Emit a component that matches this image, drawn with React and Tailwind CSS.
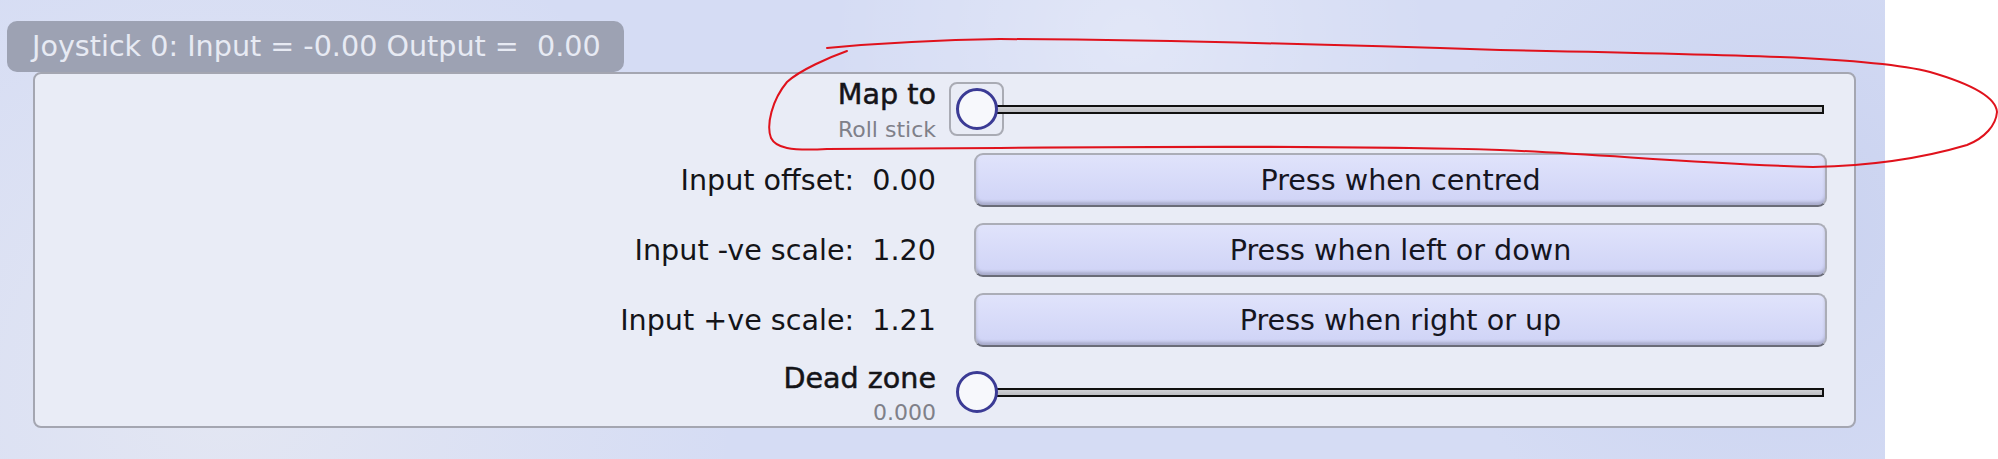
import React from "react";

const font = "font-['DejaVu_Sans','Verdana',sans-serif]";

const Knob = ({ focused }) => (
  <div className={`flex items-center justify-center w-[55px] h-[54px] rounded-[8px] border-2 ${focused ? "border-[#a9abb4]" : "border-transparent"}`}>
    <div className="relative z-10 w-[42px] h-[42px] rounded-full border-[3px] border-[#3b3b95] bg-[#f7f8fc]" />
  </div>
);

const Slider = ({ focused }) => (
  <div className="flex items-center w-[878px] h-[54px]">
    <Knob focused={focused} />
    <div className="flex-1 h-[9px] -ml-[28px] mr-[3px] border-2 border-[#101010] bg-linear-to-b from-[#cfd0d4] to-[#bdbec3]" />
  </div>
);

const StackLabel = ({ title, sub, gap }) => (
  <div className={`w-[901px] flex flex-col items-end ${gap}`}>
    <span className="text-[28.6px] leading-[32px] text-[#141418] [-webkit-text-stroke:0.5px_#141418]">{title}</span>
    <span className="text-[22px] leading-[26px] text-[#7f8089]">{sub}</span>
  </div>
);

const ButtonRow = ({ label, action, first }) => (
  <div className={`flex items-center h-[54px] ${first ? "mt-[10px]" : "mt-[16px]"}`}>
    <div className="w-[901px] text-right text-[28.6px] leading-[32px] text-[#141418] whitespace-pre">{label}</div>
    <div className="ml-[13px] w-[878px] flex h-full">
      <button className="ml-[25px] flex-1 h-full rounded-[9px] border-2 border-[#abadb7] border-b-[#6a6c78] bg-linear-to-b from-[#e0e3fb] to-[#cfd3f6] shadow-[inset_0_-3px_3px_rgba(60,60,80,0.25)] text-[28.6px] text-[#15151f]">
        {action}
      </button>
    </div>
  </div>
);

export default function App() {
  return (
    <div className={`relative w-[1998px] h-[459px] bg-white overflow-hidden ${font}`}>
      <div className="w-[1885px] h-full pl-[7px] pt-[21px] bg-[#d5dcf4] bg-[radial-gradient(circle_at_12%_85%,rgba(232,234,242,0.75),transparent_30%),radial-gradient(circle_at_60%_8%,rgba(255,255,255,0.3),transparent_25%),radial-gradient(circle_at_95%_50%,rgba(190,200,235,0.5),transparent_20%)]">
        <div className="w-[617px] h-[51px] rounded-[10px] bg-[#9da2b3] pl-[25px] flex items-center text-[28.6px] text-[#e7eaf3] whitespace-pre">
          Joystick 0: Input = -0.00 Output =  0.00
        </div>
        <div className="ml-[26px] w-[1823px] h-[356px] border-2 border-[#a4a6b1] rounded-[8px] bg-[#e9ecf6] pt-[4px]">
          {/* Map to */}
          <div className="flex items-start">
            <StackLabel title="Map to" sub="Roll stick" gap="gap-[7px]" />
            <div className="ml-[13px] mt-[4px]">
              <Slider focused />
            </div>
          </div>

          <ButtonRow first label="Input offset:  0.00" action="Press when centred" />
          <ButtonRow label="Input -ve scale:  1.20" action="Press when left or down" />
          <ButtonRow label="Input +ve scale:  1.21" action="Press when right or up" />

          {/* Dead zone */}
          <div className="flex items-start mt-[15px]">
            <StackLabel title="Dead zone" sub="0.000" gap="gap-[6px]" />
            <div className="ml-[13px] mt-[3px]">
              <Slider />
            </div>
          </div>
        </div>
      </div>

      {/* red hand-drawn annotation */}
      <svg className="absolute top-0 left-0 pointer-events-none" width="1998" height="459" viewBox="0 0 1998 459">
        <path
          d="M847 51 C830 57 800 70 787 82 C772 100 766 125 771 138 C776 148 790 151 827 149 L1000 148 C1200 146 1400 147 1500 150 C1600 154 1700 164 1813 167 C1863 166 1920 159 1967 145 C1985 138 1996 125 1997 112 C1996 98 1975 85 1930 72 C1900 64 1850 60 1780 57 C1700 54 1600 52 1500 50 C1350 45 1150 40 1000 39 C930 40 870 44 827 48"
          fill="none"
          stroke="#e0121c"
          strokeWidth="2"
          strokeLinecap="round"
        />
      </svg>
    </div>
  );
}
